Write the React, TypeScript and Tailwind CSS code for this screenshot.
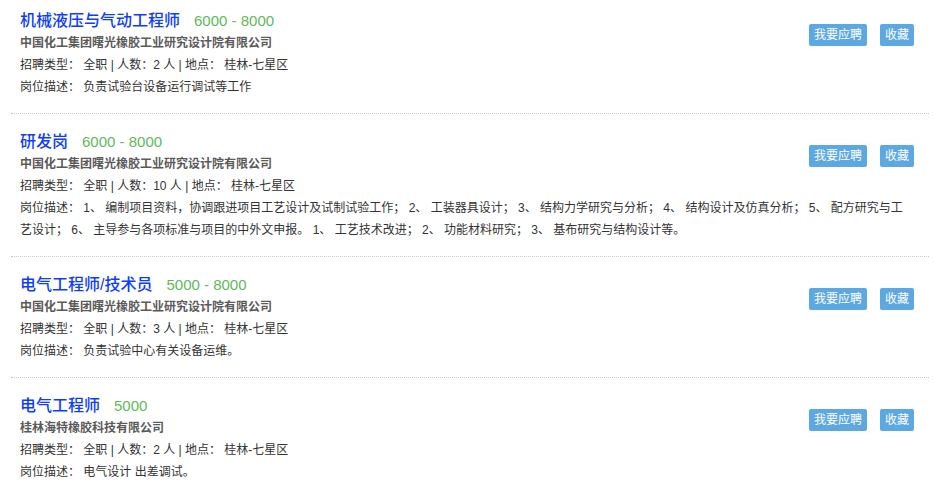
type Job = {
  title: string;
  salary: string;
  company: string;
  type: string;
  count: string;
  place: string;
  desc: string;
};

const jobs: Job[] = [
  {
    title: "机械液压与气动工程师",
    salary: "6000 - 8000",
    company: "中国化工集团曙光橡胶工业研究设计院有限公司",
    type: "全职",
    count: "2",
    place: "桂林-七星区",
    desc: "负责试验台设备运行调试等工作",
  },
  {
    title: "研发岗",
    salary: "6000 - 8000",
    company: "中国化工集团曙光橡胶工业研究设计院有限公司",
    type: "全职",
    count: "10",
    place: "桂林-七星区",
    desc: "1、 编制项目资料，协调跟进项目工艺设计及试制试验工作； 2、 工装器具设计； 3、 结构力学研究与分析； 4、 结构设计及仿真分析； 5、 配方研究与工艺设计； 6、 主导参与各项标准与项目的中外文申报。 1、 工艺技术改进； 2、 功能材料研究； 3、 基布研究与结构设计等。",
  },
  {
    title: "电气工程师/技术员",
    salary: "5000 - 8000",
    company: "中国化工集团曙光橡胶工业研究设计院有限公司",
    type: "全职",
    count: "3",
    place: "桂林-七星区",
    desc: "负责试验中心有关设备运维。",
  },
  {
    title: "电气工程师",
    salary: "5000",
    company: "桂林海特橡胶科技有限公司",
    type: "全职",
    count: "2",
    place: "桂林-七星区",
    desc: "电气设计 出差调试。",
  },
];

const JobCard = ({ job }: { job: Job }) => {
  return (
    <div className="ml-[11px] mr-[5px] pl-[9px] pr-[15px] pt-[15px] pb-[15px] first:pt-2 border-b border-dotted border-[#c8c8c8] last:border-b-0">
      <div className="float-right flex gap-[13px] mt-4">
        <button className="h-[22px] px-[5px] rounded-[2px] bg-[#5ea8e2] text-white text-[12px] leading-[22px]">
          我要应聘
        </button>
        <button className="h-[22px] px-[5px] rounded-[2px] bg-[#5ea8e2] text-white text-[12px] leading-[22px]">
          收藏
        </button>
      </div>
      <div className="flex items-baseline h-6 leading-6 pt-px">
        <h3 className="text-[16px] font-medium text-[#0c3cff]">{job.title}</h3>
        <span className="ml-[14px] text-[15px] text-[#62b85a]">{job.salary}</span>
      </div>
      <div className="text-[12px] leading-[22px] font-bold text-[#5a5a5a]">{job.company}</div>
      <div className="text-[12px] leading-[22px] text-[#333]">
        招聘类型： {job.type} | 人数：{job.count} 人 | 地点： {job.place}
      </div>
      <div className="text-[12px] leading-[22px] text-[#333]">岗位描述： {job.desc}</div>
    </div>
  );
};

const App = () => {
  return (
    <div
      className="w-[934px] h-[490px] bg-white overflow-hidden"
      style={{ fontFamily: '"Liberation Sans", "Noto Sans CJK SC", sans-serif' }}
    >
      {jobs.map((job) => (
        <JobCard job={job} key={job.title} />
      ))}
    </div>
  );
};

export default App;
